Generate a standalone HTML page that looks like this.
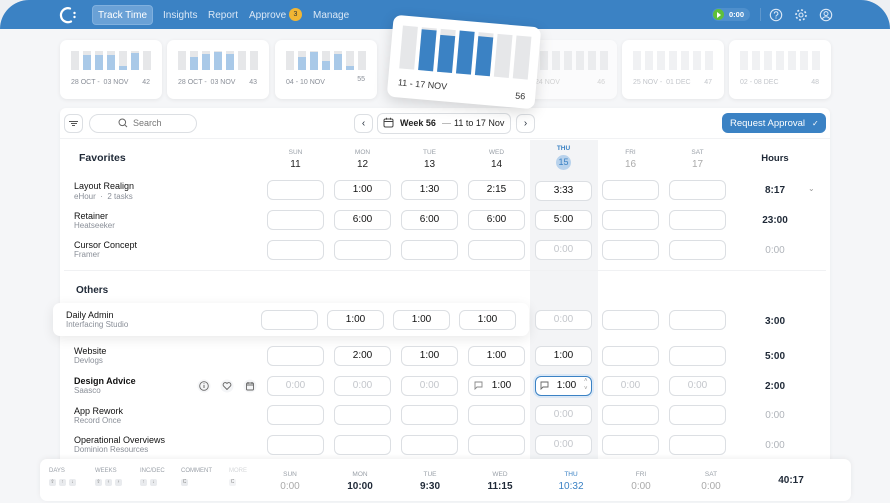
<!DOCTYPE html>
<html><head><meta charset="utf-8"><style>
*{box-sizing:border-box;margin:0;padding:0}
body{width:890px;height:503px;overflow:hidden;background:#eef0f3;font-family:"Liberation Sans",sans-serif;position:relative;color:#1f2937}
.a{position:absolute}
.shell{left:0;top:0;width:890px;height:503px;background:#f5f6f8;border-radius:30px 30px 0 0;overflow:hidden}
.hdr{left:0;top:0;width:890px;height:29px;background:#3b82c4;border-radius:30px 30px 0 0}
.nav{top:10px;font-size:10px;color:#dbe8f6;line-height:11px}
.wk{top:40px;width:102px;height:59px;background:#fff;border-radius:7px;box-shadow:0 1px 4px rgba(0,0,0,.07)}
.bars{left:11px;top:11px;height:19px;display:flex;gap:4px;align-items:flex-end}
.bars i{display:block;width:8px;height:19px;background:#e6e7e9;position:relative}
.bars i b{position:absolute;left:0;bottom:0;width:8px;background:#a9c9e8}
.wl{left:11px;top:39px;font-size:7px;color:#8a8f98}
.wn{right:12px;top:39px;font-size:7px;color:#8a8f98}
.card{left:60px;top:108px;width:770px;height:360px;background:#fff;border-radius:6px;box-shadow:0 1px 4px rgba(0,0,0,.05)}
.in{width:57px;height:20px;border:1px solid #dcdfe3;border-radius:6px;background:#fff;font-size:10px;text-align:center;line-height:18px;color:#111}
.in.e{color:#c3c6cb}
.nm{font-size:9px;color:#111}
.sub{font-size:8px;color:#8a8f98}
.dh{font-size:6.5px;color:#9aa0a8;text-align:center;width:57px}
.dn{font-size:10px;color:#222;text-align:center;width:57px}
.hr{font-size:10px;font-weight:bold;text-align:center;width:60px;left:745px}
.hr.e{font-weight:normal;color:#b0b4ba}
.kb{font-size:6px;color:#9aa0a8}
.kr{display:flex;gap:3px}
.k{display:block;width:7px;height:7px;background:#e9ebee;border-radius:2px;font-size:5px;text-align:center;line-height:7px;color:#888}
.bd{font-size:6.5px;color:#9aa0a8;text-align:center;width:60px}
.bv{font-size:10px;font-weight:bold;text-align:center;width:60px}
.fc{display:flex;align-items:center;justify-content:center}
</style></head><body>
<div class="a shell"></div>
<div class="a hdr"></div>
<svg class="a" style="left:59px;top:6px" width="18" height="18" viewBox="0 0 18 18"><path d="M11 2.5 A7 7 0 1 0 12 15.5" fill="none" stroke="#fff" stroke-width="2.2" stroke-linecap="round"/><circle cx="15.5" cy="7" r="1.2" fill="#fff"/><circle cx="15.5" cy="11" r="1.2" fill="#fff"/></svg>
<div class="a fc" style="left:92px;top:5px;width:61px;height:20px;background:#6aa1d6;border:1px solid #80b0de;border-radius:4px;color:#fff;font-size:10px;line-height:11px">Track Time</div>
<div class="a nav" style="left:163px">Insights</div>
<div class="a nav" style="left:208px">Report</div>
<div class="a nav" style="left:249px">Approve</div>
<div class="a" style="left:289px;top:8px;width:13px;height:13px;border-radius:50%;background:#f2b634;font-size:7px;text-align:center;line-height:13px;color:#333">3</div>
<div class="a nav" style="left:313px">Manage</div>
<div class="a" style="left:712px;top:8px;width:38px;height:13px;border-radius:7px;background:#4e8fcc"></div>
<div class="a" style="left:713px;top:9px;width:11px;height:11px;border-radius:50%;background:#5fbf3a"></div>
<div class="a" style="left:717px;top:11.5px;width:0;height:0;border-left:4px solid #fff;border-top:3px solid transparent;border-bottom:3px solid transparent"></div>
<div class="a" style="left:729px;top:10px;font-size:7.5px;color:#fff;font-weight:bold">0:00</div>
<div class="a" style="left:760px;top:8px;width:1px;height:13px;background:#5e97cd"></div>
<svg class="a" style="left:769px;top:8px" width="14" height="14"><circle cx="7" cy="7" r="5.7" fill="none" stroke="#dbe8f6" stroke-width="1.1"/><path d="M5.3 5.6a1.8 1.8 0 1 1 2.4 1.6c-.5.2-.7.5-.7 1v.4" fill="none" stroke="#dbe8f6" stroke-width="1"/><circle cx="7" cy="10" r=".6" fill="#dbe8f6"/></svg>
<svg class="a" style="left:794px;top:8px" width="14" height="14"><circle cx="7" cy="7" r="2" fill="none" stroke="#dbe8f6" stroke-width="1.1"/><circle cx="7" cy="7" r="5" fill="none" stroke="#dbe8f6" stroke-width="1.6" stroke-dasharray="2 1.9"/></svg>
<svg class="a" style="left:819px;top:8px" width="14" height="14"><circle cx="7" cy="7" r="5.7" fill="none" stroke="#dbe8f6" stroke-width="1.1"/><circle cx="7" cy="5.6" r="2" fill="none" stroke="#dbe8f6" stroke-width="1"/><path d="M3.2 11c1-1.6 2.3-2.2 3.8-2.2s2.8.6 3.8 2.2" fill="none" stroke="#dbe8f6" stroke-width="1"/></svg>

<div class="a wk" style="left:60px"><div class="a bars"><i></i><i><b style="height:15px"></b></i><i><b style="height:15px"></b></i><i><b style="height:15px"></b></i><i><b style="height:4px"></b></i><i><b style="height:17px"></b></i><i></i></div><div class="a wl">28 OCT -&nbsp; 03 NOV</div><div class="a wn">42</div></div>
<div class="a wk" style="left:167px"><div class="a bars"><i></i><i><b style="height:13px"></b></i><i><b style="height:16px"></b></i><i><b style="height:18px"></b></i><i><b style="height:16px"></b></i><i></i><i></i></div><div class="a wl">28 OCT -&nbsp; 03 NOV</div><div class="a wn">43</div></div>
<div class="a wk" style="left:275px"><div class="a bars"><i></i><i><b style="height:13px"></b></i><i><b style="height:18px"></b></i><i><b style="height:9px"></b></i><i><b style="height:16px"></b></i><i><b style="height:4px"></b></i><i></i></div><div class="a wl">04 - 10 NOV</div><div class="a wn" style="top:36px">55</div></div>
<div class="a wk" style="left:515px;opacity:.6"><div class="a bars" style="left:25px"><i></i><i></i><i></i><i></i><i></i><i></i></div><div class="a wl" style="left:20px;color:#bbb">24 NOV</div><div class="a wn" style="color:#bbb">46</div></div>
<div class="a wk" style="left:622px"><div class="a bars"><i style="background:#f0f1f3"></i><i style="background:#f0f1f3"></i><i style="background:#f0f1f3"></i><i style="background:#f0f1f3"></i><i style="background:#f0f1f3"></i><i style="background:#f0f1f3"></i><i style="background:#f0f1f3"></i></div><div class="a wl" style="color:#c3c6cb">25 NOV -&nbsp; 01 DEC</div><div class="a wn" style="color:#c3c6cb">47</div></div>
<div class="a wk" style="left:729px"><div class="a bars"><i style="background:#f0f1f3"></i><i style="background:#f0f1f3"></i><i style="background:#f0f1f3"></i><i style="background:#f0f1f3"></i><i style="background:#f0f1f3"></i><i style="background:#f0f1f3"></i><i style="background:#f0f1f3"></i></div><div class="a wl" style="color:#c3c6cb">02 - 08 DEC</div><div class="a wn" style="color:#c3c6cb">48</div></div>

<div class="a card"></div>
<div class="a" style="left:530px;top:140px;width:68px;height:320px;background:#f3f4f6"></div>
<div class="a" style="left:60px;top:138px;width:770px;height:1px;background:#f1f2f4"></div>
<div class="a" style="left:64px;top:114px;width:19px;height:19px;border:1px solid #dcdfe3;border-radius:6px"></div>
<div class="a" style="left:69px;top:121px;width:9px;height:1px;background:#555"></div>
<div class="a" style="left:70.5px;top:123px;width:6px;height:1px;background:#555"></div>
<div class="a" style="left:72px;top:125px;width:3px;height:1px;background:#555"></div>
<div class="a" style="left:89px;top:114px;width:108px;height:19px;border:1px solid #dcdfe3;border-radius:10px"></div>
<svg class="a" style="left:118px;top:118px" width="10" height="10"><circle cx="4.3" cy="4.3" r="3.3" fill="none" stroke="#666" stroke-width="1"/><path d="M6.8 6.8L9 9" stroke="#666" stroke-width="1"/></svg>
<div class="a" style="left:133px;top:118px;font-size:9px;color:#777">Search</div>
<div class="a fc" style="left:354px;top:114px;width:19px;height:19px;border:1px solid #dcdfe3;border-radius:6px;font-size:10px">‹</div>
<div class="a" style="left:377px;top:113px;width:134px;height:21px;border:1px solid #dcdfe3;border-radius:6px"></div>
<svg class="a" style="left:383px;top:117px" width="11" height="11"><rect x="1" y="2" width="9" height="8" rx="1.5" fill="none" stroke="#444" stroke-width="1"/><path d="M1 4.5h9M3.5 .8v2M7.5 .8v2" stroke="#444" stroke-width="1"/></svg>
<div class="a" style="left:400px;top:118px;font-size:9px;color:#222;font-weight:bold">Week 56</div>
<div class="a" style="left:442px;top:123px;width:9px;height:1px;background:#bbb"></div>
<div class="a" style="left:454px;top:118px;font-size:9px;color:#222">11 to 17 Nov</div>
<div class="a fc" style="left:516px;top:114px;width:19px;height:19px;border:1px solid #dcdfe3;border-radius:6px;font-size:10px">›</div>
<div class="a" style="left:722px;top:113px;width:104px;height:20px;background:#3b82c4;border-radius:6px;color:#fff;font-size:9.5px;display:flex;align-items:center;padding-left:8px;white-space:nowrap;line-height:11px">Request Approval <span style="margin-left:7px;font-size:8px">✓</span></div>

<div class="a" style="left:79px;top:152px;font-size:10.5px;font-weight:bold">Favorites</div>
<div class="a dh" style="left:267px;top:149px">SUN</div><div class="a dn" style="left:267px;top:159px">11</div>
<div class="a dh" style="left:334px;top:149px">MON</div><div class="a dn" style="left:334px;top:159px">12</div>
<div class="a dh" style="left:401px;top:149px">TUE</div><div class="a dn" style="left:401px;top:159px">13</div>
<div class="a dh" style="left:468px;top:149px">WED</div><div class="a dn" style="left:468px;top:159px">14</div>
<div class="a dh" style="left:535px;top:145px;color:#3b82c4;font-weight:bold">THU</div>
<div class="a" style="left:556px;top:155px;width:15px;height:15px;border-radius:50%;background:#b8d2ec;color:#3b82c4;font-size:9px;text-align:center;line-height:15px">15</div>
<div class="a dh" style="left:602px;top:149px">FRI</div><div class="a dn" style="left:602px;top:159px;color:#aaa">16</div>
<div class="a dh" style="left:669px;top:149px">SAT</div><div class="a dn" style="left:669px;top:159px;color:#aaa">17</div>
<div class="a" style="left:745px;top:153px;width:60px;text-align:center;font-size:9.5px;font-weight:bold">Hours</div>

<div class="a nm" style="left:74px;top:181px">Layout Realign</div><div class="a sub" style="left:74px;top:192px">eHour &nbsp;·&nbsp; 2 tasks</div>
<div class="a in" style="left:267px;top:180px"></div><div class="a in" style="left:334px;top:180px">1:00</div><div class="a in" style="left:401px;top:180px">1:30</div><div class="a in" style="left:468px;top:180px">2:15</div><div class="a in" style="left:535px;top:181px">3:33</div><div class="a in" style="left:602px;top:180px"></div><div class="a in" style="left:669px;top:180px"></div>
<div class="a hr" style="top:185px">8:17</div><div class="a" style="left:808px;top:184px;font-size:8px;color:#999">⌄</div>

<div class="a nm" style="left:74px;top:211px">Retainer</div><div class="a sub" style="left:74px;top:221px">Heatseeker</div>
<div class="a in" style="left:267px;top:210px"></div><div class="a in" style="left:334px;top:210px">6:00</div><div class="a in" style="left:401px;top:210px">6:00</div><div class="a in" style="left:468px;top:210px">6:00</div><div class="a in" style="left:535px;top:210px">5:00</div><div class="a in" style="left:602px;top:210px"></div><div class="a in" style="left:669px;top:210px"></div>
<div class="a hr" style="top:215px">23:00</div>

<div class="a nm" style="left:74px;top:240px">Cursor Concept</div><div class="a sub" style="left:74px;top:250px">Framer</div>
<div class="a in" style="left:267px;top:240px"></div><div class="a in" style="left:334px;top:240px"></div><div class="a in" style="left:401px;top:240px"></div><div class="a in" style="left:468px;top:240px"></div><div class="a in e" style="left:535px;top:240px">0:00</div><div class="a in" style="left:602px;top:240px"></div><div class="a in" style="left:669px;top:240px"></div>
<div class="a hr e" style="top:245px">0:00</div>

<div class="a" style="left:64px;top:270px;width:762px;height:1px;background:#f0f1f3"></div>
<div class="a" style="left:76px;top:285px;font-size:10px;font-weight:bold">Others</div>

<div class="a" style="left:53px;top:303px;width:476px;height:33px;background:#fff;border-radius:7px;box-shadow:0 3px 12px rgba(0,0,0,.09)"></div>
<div class="a nm" style="left:66px;top:310px">Daily Admin</div><div class="a sub" style="left:66px;top:320px">Interfacing Studio</div>
<div class="a in" style="left:261px;top:310px"></div><div class="a in" style="left:327px;top:310px">1:00</div><div class="a in" style="left:393px;top:310px">1:00</div><div class="a in" style="left:459px;top:310px">1:00</div>
<div class="a in e" style="left:535px;top:310px">0:00</div><div class="a in" style="left:602px;top:310px"></div><div class="a in" style="left:669px;top:310px"></div>
<div class="a hr" style="top:316px">3:00</div>

<div class="a nm" style="left:74px;top:346px">Website</div><div class="a sub" style="left:74px;top:356px">Devlogs</div>
<div class="a in" style="left:267px;top:346px"></div><div class="a in" style="left:334px;top:346px">2:00</div><div class="a in" style="left:401px;top:346px">1:00</div><div class="a in" style="left:468px;top:346px">1:00</div><div class="a in" style="left:535px;top:346px">1:00</div><div class="a in" style="left:602px;top:346px"></div><div class="a in" style="left:669px;top:346px"></div>
<div class="a hr" style="top:351px">5:00</div>

<div class="a nm" style="left:74px;top:376px;font-weight:bold">Design Advice</div><div class="a sub" style="left:74px;top:386px">Saasco</div>
<svg class="a" style="left:197px;top:379px" width="64" height="14"><circle cx="7" cy="7" r="6.5" fill="#f4f5f7"/><circle cx="7" cy="7" r="4.3" fill="none" stroke="#666" stroke-width=".9"/><path d="M7 6v3" stroke="#666"/><circle cx="7" cy="4.7" r=".5" fill="#666"/><circle cx="30" cy="7" r="6.5" fill="#f4f5f7"/><path d="M30 10.5l-3.5-3.5a2 2 0 0 1 3.5-2.5a2 2 0 0 1 3.5 2.5z" fill="none" stroke="#666" stroke-width=".9"/><circle cx="53" cy="7" r="6.5" fill="#f4f5f7"/><rect x="49.5" y="4" width="7" height="7" rx="1" fill="none" stroke="#666" stroke-width=".9"/><path d="M49.5 6h7M51 3v2M55 3v2" stroke="#666" stroke-width=".9"/></svg>
<div class="a in e" style="left:267px;top:376px">0:00</div><div class="a in e" style="left:334px;top:376px">0:00</div><div class="a in e" style="left:401px;top:376px">0:00</div><div class="a in" style="left:468px;top:376px;padding-left:10px">1:00</div>
<svg class="a" style="left:474px;top:381px" width="9" height="9"><path d="M1 1h7v5H3L1 8z" fill="none" stroke="#888" stroke-width=".9"/></svg>
<div class="a in" style="left:535px;top:376px;border:1.5px solid #3b82c4;box-shadow:0 0 0 2px #dbe8f6;padding-left:6px">1:00</div>
<svg class="a" style="left:540px;top:381px" width="9" height="9"><path d="M1 1h7v5H3L1 8z" fill="none" stroke="#666" stroke-width=".9"/></svg>
<div class="a" style="left:584px;top:377px;font-size:6px;color:#999;line-height:8px">˄<br>˅</div>
<div class="a in e" style="left:602px;top:376px">0:00</div><div class="a in e" style="left:669px;top:376px">0:00</div>
<div class="a hr" style="top:381px">2:00</div>

<div class="a nm" style="left:74px;top:406px">App Rework</div><div class="a sub" style="left:74px;top:416px">Record Once</div>
<div class="a in" style="left:267px;top:405px"></div><div class="a in" style="left:334px;top:405px"></div><div class="a in" style="left:401px;top:405px"></div><div class="a in" style="left:468px;top:405px"></div><div class="a in e" style="left:535px;top:405px">0:00</div><div class="a in" style="left:602px;top:405px"></div><div class="a in" style="left:669px;top:405px"></div>
<div class="a hr e" style="top:410px">0:00</div>

<div class="a nm" style="left:74px;top:435px">Operational Overviews</div><div class="a sub" style="left:74px;top:445px">Dominion Resources</div>
<div class="a in" style="left:267px;top:435px"></div><div class="a in" style="left:334px;top:435px"></div><div class="a in" style="left:401px;top:435px"></div><div class="a in" style="left:468px;top:435px"></div><div class="a in e" style="left:535px;top:435px">0:00</div><div class="a in" style="left:602px;top:435px"></div><div class="a in" style="left:669px;top:435px"></div>
<div class="a hr e" style="top:440px">0:00</div>

<div class="a" style="left:40px;top:459px;width:811px;height:42px;background:#fff;border-radius:7px;box-shadow:0 -1px 6px rgba(0,0,0,.06)"></div>
<div class="a kb" style="left:49px;top:468px">DAYS</div><div class="a kr" style="left:49px;top:479px"><span class="k">⇧</span><span class="k">↑</span><span class="k">↓</span></div>
<div class="a kb" style="left:95px;top:468px">WEEKS</div><div class="a kr" style="left:95px;top:479px"><span class="k">⇧</span><span class="k">‹</span><span class="k">›</span></div>
<div class="a kb" style="left:140px;top:468px">INC/DEC</div><div class="a kr" style="left:140px;top:479px"><span class="k">↑</span><span class="k">↓</span></div>
<div class="a kb" style="left:181px;top:468px">COMMENT</div><div class="a kr" style="left:181px;top:479px"><span class="k">C</span></div>
<div class="a kb" style="left:229px;top:468px;color:#d5d7da">MORE</div><div class="a kr" style="left:229px;top:479px"><span class="k" style="background:#f2f3f5">C</span></div>
<div class="a bd" style="left:260px;top:471px">SUN</div><div class="a bv" style="left:260px;top:481px;font-weight:normal;color:#aaa">0:00</div>
<div class="a bd" style="left:330px;top:471px">MON</div><div class="a bv" style="left:330px;top:481px">10:00</div>
<div class="a bd" style="left:400px;top:471px">TUE</div><div class="a bv" style="left:400px;top:481px">9:30</div>
<div class="a bd" style="left:470px;top:471px">WED</div><div class="a bv" style="left:470px;top:481px">11:15</div>
<div class="a bd" style="left:541px;top:471px;color:#3b82c4">THU</div><div class="a bv" style="left:541px;top:481px;color:#3b82c4;font-weight:normal">10:32</div>
<div class="a bd" style="left:611px;top:471px">FRI</div><div class="a bv" style="left:611px;top:481px;font-weight:normal;color:#aaa">0:00</div>
<div class="a bd" style="left:681px;top:471px">SAT</div><div class="a bv" style="left:681px;top:481px;font-weight:normal;color:#aaa">0:00</div>
<div class="a bv" style="left:761px;top:475px">40:17</div>

<div class="a" style="left:390px;top:21px;width:148px;height:82px;background:#fff;border-radius:8px;box-shadow:0 4px 14px rgba(0,0,0,.15);transform:rotate(5deg)">
<div class="a" style="left:10px;top:10px;display:flex;gap:4px;align-items:flex-end">
<i style="display:block;width:15px;height:43px;background:#e6e7e9"></i>
<i style="display:block;width:15px;height:43px;background:#e6e7e9;position:relative"><b style="position:absolute;bottom:0;left:0;width:15px;height:41px;background:#3b82c4"></b></i>
<i style="display:block;width:15px;height:43px;background:#e6e7e9;position:relative"><b style="position:absolute;bottom:0;left:0;width:15px;height:37px;background:#3b82c4"></b></i>
<i style="display:block;width:15px;height:43px;background:#3b82c4"></i>
<i style="display:block;width:15px;height:43px;background:#e6e7e9;position:relative"><b style="position:absolute;bottom:0;left:0;width:15px;height:39px;background:#3b82c4"></b></i>
<i style="display:block;width:15px;height:43px;background:#e6e7e9"></i>
<i style="display:block;width:15px;height:43px;background:#e6e7e9"></i>
</div>
<div class="a" style="left:10px;top:62px;font-size:9px;color:#333">11 - 17 NOV</div>
<div class="a" style="right:10px;top:65px;font-size:9px;color:#333">56</div>
</div>
</body></html>
